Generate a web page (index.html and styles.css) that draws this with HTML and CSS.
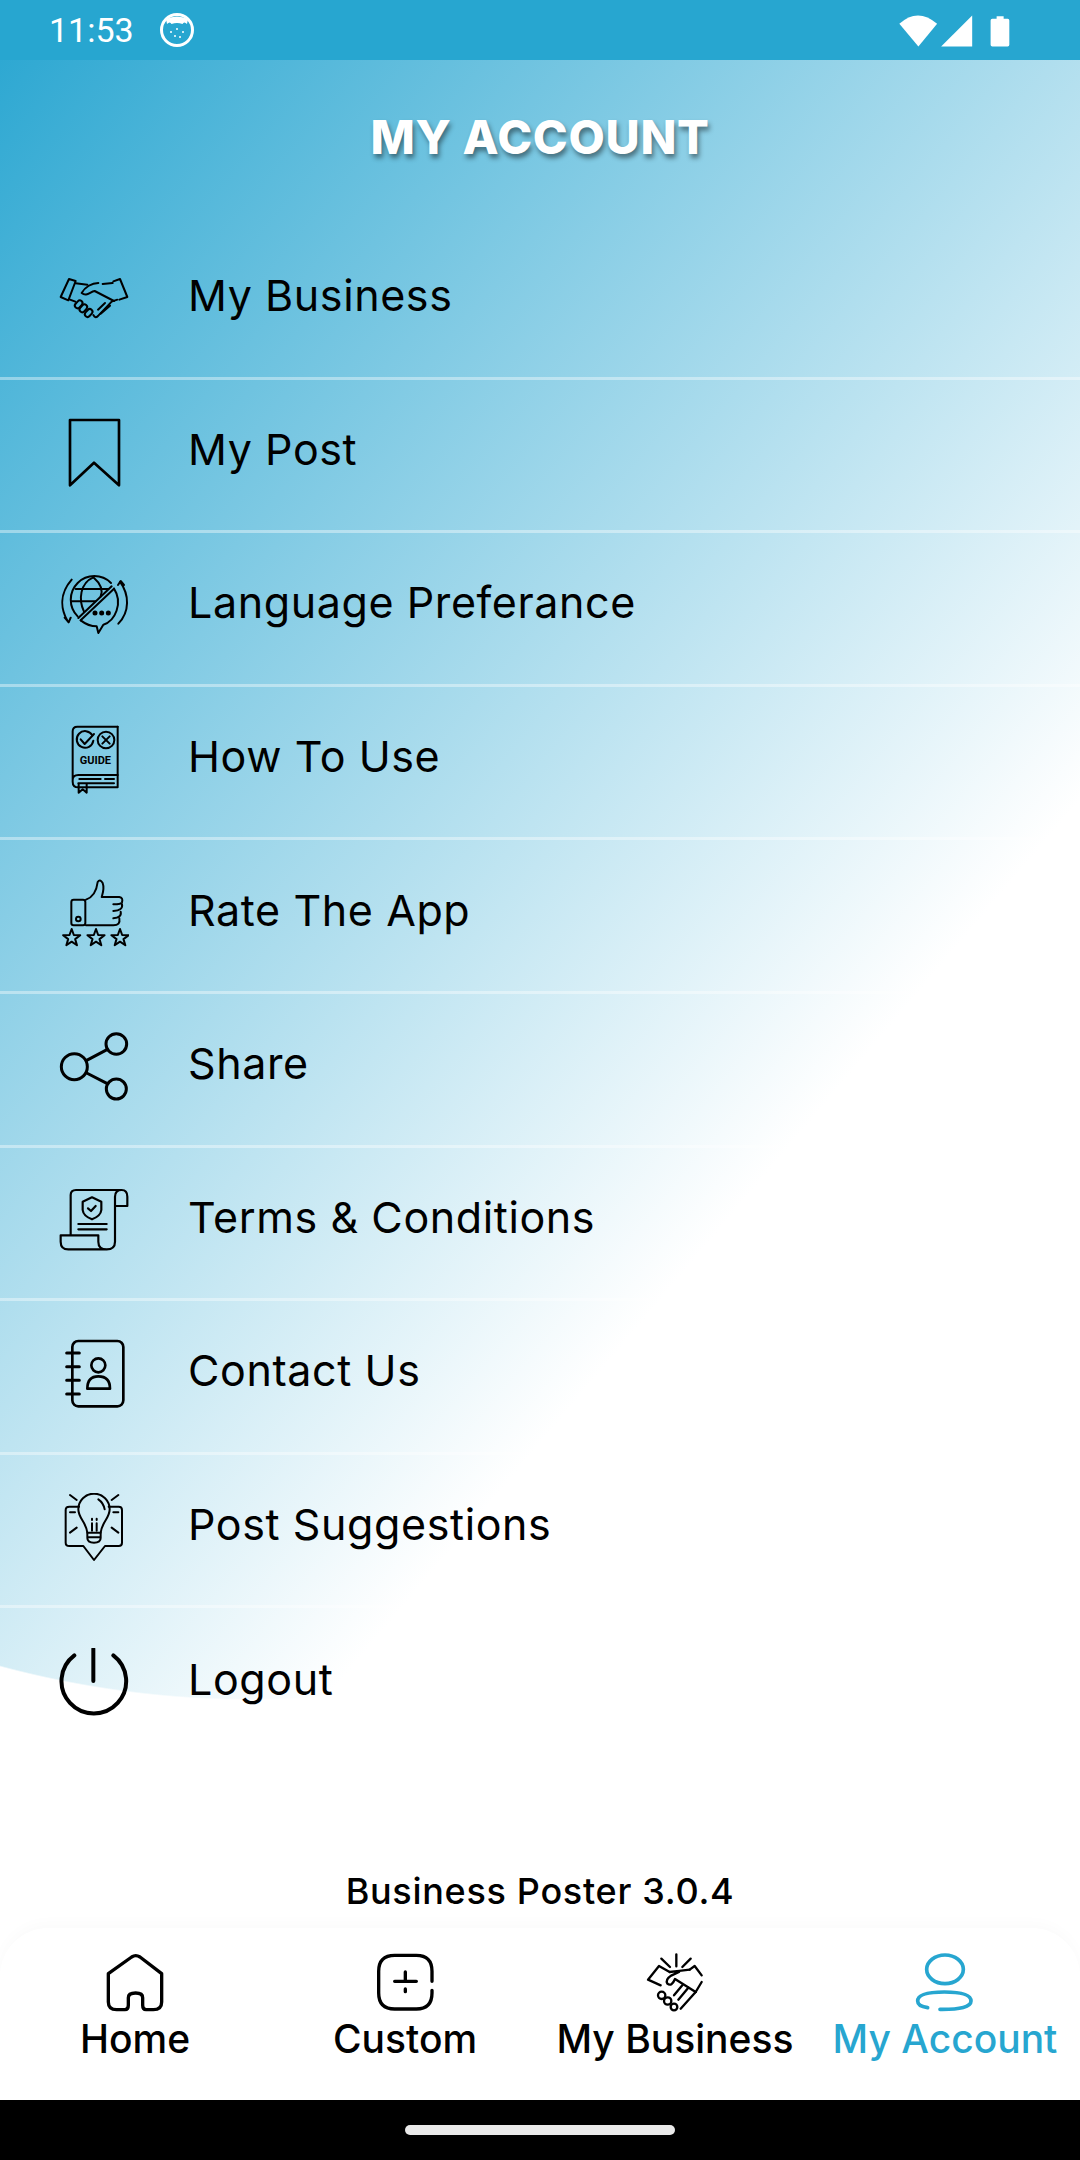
FILE: index.html
```html
<!DOCTYPE html>
<html lang="en">
<head>
  <meta charset="UTF-8">
  <title>My Account - Business Poster</title>
  <link rel="stylesheet" href="styles.css">
</head>
<body>
  <div class="screen">
    <div class="statusbar">
      <div class="status-left">
        <span class="time">11:53</span>
        <svg class="face" viewBox="0 0 34 34">
          <circle cx="17" cy="17" r="15.5" fill="#27a6d0" stroke="#fff" stroke-width="3"/>
          <path d="M6 6 Q17 1 28 6 L27 11 Q24 8 22.5 11 Q17 9 11.500 11 Q10 8 7 11 Z" fill="#fff"/>
          <circle cx="11" cy="19" r="1" fill="#fff"/><circle cx="17" cy="16" r="1" fill="#fff"/>
          <circle cx="23" cy="19" r="1" fill="#fff"/><circle cx="15" cy="23" r="1" fill="#fff"/>
          <circle cx="20" cy="24" r="1" fill="#fff"/>
        </svg>
      </div>
      <svg class="status-right" viewBox="50 30 350 110">
        <path d="M60 65 Q115 15 173 65 L117 133 Z" fill="#fff"/>
        <path d="M185 133 L278 40 V133 Z" fill="#fff"/>
        <path d="M351 50 V42 H372 V50 H384 Q389 50 389 55 V128 Q389 133 384 133 H338 Q333 133 333 128 V55 Q333 50 338 50 Z" fill="#fff"/>
      </svg>
    </div>

    <main class="content">
      <h1 class="title">MY ACCOUNT</h1>

      <ul class="menu">
        <li class="menu-row">
          <svg class="menu-icon" viewBox="87 43 210 210" stroke-width="6">
            <path d="M117 88 L137 94 L115 152 L92 142 Z"/>
            <path d="M250 95 L270 88 L292 142 L268 150"/>
            <path d="M137 101 L172 105 M218 103 L248 100"/>
            <path d="M205 100 C185 100 165 112 155 130 C170 142 180 126 194 124 L252 154"/>
            <path d="M120 150 L136 156 M262 150 L245 156 L205 198 Q197 208 190 196"/>
            <path d="M240 168 L212 192 M225 160 L204 180"/>
            <rect x="-8" y="-13" width="16" height="26" rx="8" transform="translate(146 164) rotate(42)"/>
            <rect x="-8" y="-13" width="16" height="26" rx="8" transform="translate(160 176) rotate(42)"/>
            <rect x="-8" y="-13" width="16" height="26" rx="8" transform="translate(176 190) rotate(42)"/>
          </svg>
          <span class="menu-label">My Business</span>
        </li>
        <li class="menu-row">
          <svg class="menu-icon" viewBox="87 504 210 210" stroke-width="8">
            <path d="M120 510 H267 V706 L192 638 L120 706 Z"/>
          </svg>
          <span class="menu-label">My Post</span>
        </li>
        <li class="menu-row">
          <svg class="menu-icon" viewBox="87 964 210 210" stroke-width="6">
            <path d="M143 1100 A68 68 0 0 1 243 1000"/>
            <path d="M145 1105 L245 1010 M152 1112 L252 1017"/>
            <path d="M190 983 C150 1000 145 1050 162 1086 M190 983 C215 1005 218 1025 212 1040"/>
            <path d="M137 1018 H235 M124 1055 H196"/>
            <path d="M252 1017 C280 1060 255 1115 220 1125 L205 1150 L200 1130 C180 1130 165 1122 152 1112"/>
            <path d="M125 990 C90 1030 90 1075 113 1115 M104 1104 L116 1118 L122 1104"/>
            <path d="M270 996 C298 1035 300 1085 265 1122 M264 1006 L272 994 L282 1006"/>
            <circle cx="195" cy="1090" r="4.500" fill="#000"/><circle cx="215" cy="1090" r="4.500" fill="#000"/><circle cx="235" cy="1090" r="4.500" fill="#000"/>
          </svg>
          <span class="menu-label">Language Preferance</span>
        </li>
        <li class="menu-row">
          <svg class="menu-icon" viewBox="87 75 210 210" stroke-width="6">
            <path d="M263 80 H142 Q128 80 128 94 V245 Q128 262 145 262 H263 M128 240 Q128 225 145 225 H263 V262"/>
            <path d="M148 237 H212 M225 237 H252 M145 250 H252"/>
            <path d="M146 252 V278 L158 268 L170 278 V252"/>
            <path d="M187 106 A25 25 0 1 0 190 122"/>
            <path d="M152 118 L164 132 L192 102"/>
            <circle cx="228" cy="120" r="25"/>
            <path d="M217 109 L239 131 M239 109 L217 131"/>
            <path d="M263 80 V225"/>
            <text class="guide-text" x="196" y="192">GUIDE</text>
          </svg>
          <span class="menu-label">How To Use</span>
        </li>
        <li class="menu-row">
          <svg class="menu-icon" viewBox="87 536 210 210" stroke-width="6">
            <rect x="124" y="598" width="42" height="77" rx="7"/>
            <circle cx="145" cy="656" r="7"/>
            <path d="M168 598 C190 590 200 570 203 545 Q210 535 218 548 C224 565 218 580 215 590 H268 Q280 592 276 606 Q274 612 250 612 M276 612 Q280 630 250 632 M272 634 Q276 652 250 654 M268 654 Q272 675 250 675 H168"/>
            <g>
              <polygon points="0,-27 6.500,-8.900 25.700,-8.300 10.500,3.400 15.900,21.800 0,11 -15.900,21.800 -10.500,3.400 -25.700,-8.300 -6.500,-8.900" transform="translate(125 713)"/>
              <polygon points="0,-27 6.500,-8.900 25.700,-8.300 10.500,3.400 15.900,21.800 0,11 -15.900,21.800 -10.500,3.400 -25.700,-8.300 -6.500,-8.900" transform="translate(198 713)"/>
              <polygon points="0,-27 6.500,-8.900 25.700,-8.300 10.500,3.400 15.900,21.800 0,11 -15.900,21.800 -10.500,3.400 -25.700,-8.300 -6.500,-8.900" transform="translate(270 713)"/>
            </g>
          </svg>
          <span class="menu-label">Rate The App</span>
        </li>
        <li class="menu-row">
          <svg class="menu-icon" viewBox="87 37 210 210" stroke-width="9">
            <circle cx="133" cy="141" r="39"/>
            <circle cx="259" cy="73" r="31"/>
            <circle cx="259" cy="208" r="30"/>
            <path d="M170 122 L231 90 M170 160 L232 192"/>
          </svg>
          <span class="menu-label">Share</span>
        </li>
        <li class="menu-row">
          <svg class="menu-icon" viewBox="87 498 210 210" stroke-width="6.500">
            <path d="M122 645 V525 Q122 510 138 510 H275 Q292 510 292 530 V558 H255 V530 Q255 510 275 510"/>
            <path d="M255 558 V665 Q255 688 230 688 H115 Q92 688 92 665 V646 H205 V665 Q205 688 230 688"/>
            <path d="M186 532 L214 545 V570 Q212 588 186 598 Q160 588 158 570 V545 Z"/>
            <path d="M174 565 L183 573 L197 558"/>
            <path d="M145 612 H230 M145 628 H230"/>
          </svg>
          <span class="menu-label">Terms &amp; Conditions</span>
        </li>
        <li class="menu-row">
          <svg class="menu-icon" viewBox="87 58 210 210" stroke-width="8">
            <rect x="127" y="64" width="153" height="196" rx="18"/>
            <path d="M110 100 H148 M110 141 H148 M110 182 H148 M110 223 H148" stroke-width="9"/>
            <circle cx="205" cy="137" r="21"/>
            <path d="M172 207 Q172 170 205 170 Q240 170 240 207 Z"/>
          </svg>
          <span class="menu-label">Contact Us</span>
        </li>
        <li class="menu-row">
          <svg class="menu-icon" viewBox="87 39 210 210" stroke-width="6">
            <path d="M172 158 C168 125 145 115 145 88 A47 47 0 1 1 239 88 C239 115 216 125 212 158 Z"/>
            <path d="M172 158 V174 Q172 188 192 188 Q212 188 212 174 V158 M172 172 H212"/>
            <path d="M186 116 V120 M200 116 V120 M186 130 V152 M200 130 V152"/>
            <path d="M147 80 H118 Q107 80 107 90 V188 Q107 198 118 198 H160 L192 240 L225 198 H266 Q276 198 276 188 V90 Q276 80 266 80 H236"/>
            <path d="M120 45 L140 60 M265 45 L245 60 M120 158 L140 143 M265 158 L245 143 M120 97 H135 M250 97 H265"/>
            <path d="M205 58 Q220 68 224 88"/>
          </svg>
          <span class="menu-label">Post Suggestions</span>
        </li>
        <li class="menu-row">
          <svg class="menu-icon" viewBox="87 504 210 210" stroke-width="12">
            <path d="M133 526 A97 97 0 1 0 250 526"/>
            <path d="M190 507 V603"/>
          </svg>
          <span class="menu-label">Logout</span>
        </li>
      </ul>

      <p class="version">Business Poster 3.0.4</p>
    </main>

    <nav class="tabbar">
      <div class="tab">
        <svg class="tab-icon" viewBox="45 35 180 180" stroke-width="10">
          <path d="M55 100 L125 50 Q137 42 150 50 L215 100 V185 Q215 208 190 208 H168 Q158 208 158 195 V172 Q158 158 137 158 Q115 158 115 172 V195 Q115 208 105 208 H80 Q55 208 55 185 Z"/>
        </svg>
        <span class="tab-label">Home</span>
      </div>
      <div class="tab">
        <svg class="tab-icon" viewBox="856 37 180 180" stroke-width="10">
          <path d="M1027 125 V95 Q1027 47 980 47 H915 Q867 47 867 95 V160 Q867 208 915 208 H980 Q1027 208 1027 160 V152"/>
          <path d="M915 125 H980 M947 97 V125 M947 148 V156"/>
        </svg>
        <span class="tab-label">Custom</span>
      </div>
      <div class="tab">
        <svg class="tab-icon" viewBox="138 65 180 180" stroke-width="7">
          <path d="M187 85 L213 110 M232 72 V108 M275 85 L250 110"/>
          <path d="M185 165 L147 148 L180 107 L212 125 M272 118 L287 107 L308 135 M308 155 L290 185"/>
          <path d="M212 125 Q240 122 272 118 M240 125 L218 135 Q198 148 205 160 Q218 170 228 146 L290 185"/>
          <path d="M290 185 L245 235 M268 172 L238 208 M250 165 L225 195"/>
          <circle cx="188" cy="195" r="11"/><circle cx="206" cy="212" r="11"/><circle cx="225" cy="230" r="10"/>
        </svg>
        <span class="tab-label">My Business</span>
      </div>
      <div class="tab tab-active">
        <svg class="tab-icon" viewBox="947 65 180 180" stroke-width="11">
          <ellipse cx="1037" cy="117" rx="55" ry="43"/>
          <path d="M985 232 Q955 228 955 212 Q955 185 1035 185 Q1115 185 1115 212 Q1115 238 1022 237"/>
        </svg>
        <span class="tab-label">My Account</span>
      </div>
    </nav>

    <div class="navbar"><span class="nav-handle"></span></div>
  </div>
</body>
</html>
```

FILE: styles.css
```css
* {
  box-sizing: border-box;
}
html, body {
  margin: 0;
  padding: 0;
  background: #fff;
}
body {
  font-family: Inter, "Open Sans", sans-serif;
  color: #000;
}
.screen {
  width: 1080px;
  height: 2160px;
  display: flex;
  flex-direction: column;
  overflow: hidden;
}

/* status bar */
.statusbar {
  height: 60px;
  flex: none;
  background-color: #27a6d0;
  display: flex;
  align-items: center;
  justify-content: space-between;
  padding: 0 67px 0 49px;
}
.status-left {
  display: flex;
  align-items: center;
  gap: 26px;
}
.time {
  font-family: Roboto, sans-serif;
  font-size: 34px;
  color: #fff;
}
.face {
  width: 34px;
  height: 34px;
}
.status-right {
  width: 117px;
  height: 37px;
}

/* main area */
.content {
  flex: 1;
  display: flex;
  flex-direction: column;
  background:
    radial-gradient(ellipse 1234px 1600px at 250px 40px, rgba(255,255,255,0) 99.9%, #fff 100%),
    linear-gradient(130deg, #2ea8d2 0, #fff 1303px);
}
.title {
  height: 166px;
  margin: 0;
  padding-top: 50px;
  text-align: center;
  font-size: 47px;
  line-height: 54px;
  font-weight: 800;
  letter-spacing: 0.7px;
  color: #fff;
  text-shadow: 2px 4px 5px rgba(0, 0, 0, 0.45);
}
.menu {
  list-style: none;
  margin: 0;
  padding: 0;
}
.menu-row {
  height: 153.6px;
  display: flex;
  align-items: center;
  gap: 59px;
  padding: 0 0 4px 59px;
  border-bottom: 3px solid rgba(255, 255, 255, 0.4);
}
.menu-row:last-child {
  border-bottom: none;
}
.menu-icon {
  width: 70px;
  height: 70px;
  flex: none;
  fill: none;
  stroke: #000;
  stroke-linecap: round;
  stroke-linejoin: round;
}
.guide-text {
  font-family: Roboto, sans-serif;
  font-size: 33px;
  font-weight: 700;
  text-anchor: middle;
  fill: #000;
  stroke: none;
}
.menu-label {
  font-size: 43px;
  line-height: 50px;
  margin-bottom: 8px;
  letter-spacing: 0.6px;
}
.version {
  margin: 0;
  padding-top: 108px;
  text-align: center;
  font-size: 36px;
  line-height: 42px;
  font-weight: 500;
  letter-spacing: 0.7px;
}

/* bottom tabs */
.tabbar {
  height: 172px;
  flex: none;
  display: grid;
  grid-template-columns: repeat(4, 1fr);
  background-color: #fff;
  border-radius: 48px 48px 0 0;
  box-shadow: 0 -5px 14px rgba(0, 0, 0, 0.02);
  padding-top: 24px;
}
.tab {
  display: flex;
  flex-direction: column;
  align-items: center;
}
.tab-icon {
  width: 60px;
  height: 60px;
  fill: none;
  stroke: currentColor;
  stroke-linecap: round;
  stroke-linejoin: round;
}
.tab-label {
  font-size: 39px;
  line-height: 44px;
  font-weight: 500;
  white-space: nowrap;
  margin-top: 5px;
}
.tab-active {
  color: #27a6d0;
}

/* android nav */
.navbar {
  height: 60px;
  flex: none;
  background-color: #000;
  display: flex;
  align-items: center;
  justify-content: center;
}
.nav-handle {
  width: 270px;
  height: 10px;
  border-radius: 5px;
  background-color: #eaeaea;
}
```
